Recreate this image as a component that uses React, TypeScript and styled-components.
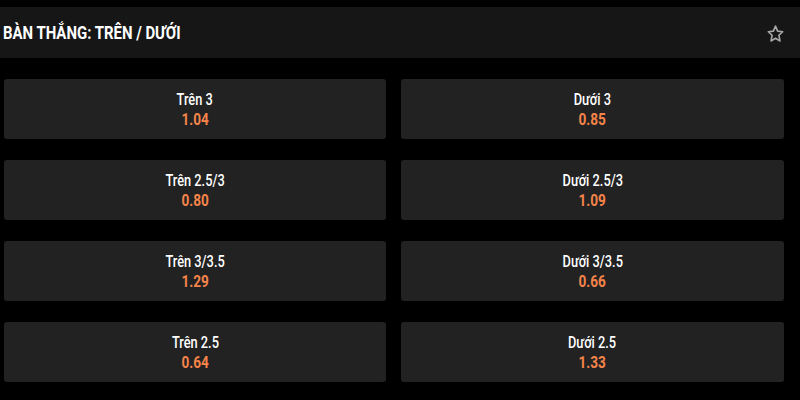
import React from 'react';
import styled, { createGlobalStyle } from 'styled-components';

const GlobalStyle = createGlobalStyle`
  html, body {
    margin: 0;
    padding: 0;
    background: #000;
    font-family: "Roboto", "Liberation Sans", sans-serif;
  }
`;

const Page = styled.div`
  width: 800px;
  height: 400px;
  background: #000;
  padding-top: 7px;
  box-sizing: border-box;
  overflow: hidden;
`;

const Header = styled.div`
  height: 51px;
  background: #161616;
  display: flex;
  align-items: center;
  justify-content: space-between;
  padding: 0 16px 0 3px;
`;

// the original uses a condensed face; Roboto is squeezed to match
const Title = styled.h2`
  margin: 0;
  color: #fff;
  font-size: 18px;
  font-weight: 700;
  white-space: nowrap;
  transform: scaleX(0.83);
  transform-origin: left center;
`;

const StarButton = styled.button`
  background: none;
  border: none;
  padding: 0;
  display: flex;
  margin-top: 1px;
`;

const Grid = styled.div`
  display: grid;
  grid-template-columns: 382px 383px;
  column-gap: 15px;
  row-gap: 21px;
  padding: 21px 0 0 4px;
`;

const Card = styled.div`
  height: 60px;
  background: #222222;
  border-radius: 3px;
  display: flex;
  flex-direction: column;
  align-items: center;
  justify-content: center;
  gap: 1px;
`;

const Label = styled.span`
  color: #fff;
  font-size: 16px;
  font-weight: 500;
  line-height: 19px;
  white-space: nowrap;
  transform: scaleX(0.8);
`;

const Odds = styled.span`
  color: #f5844a;
  font-size: 16px;
  font-weight: 700;
  line-height: 19px;
  transform: scaleX(0.85);
`;

const rows: [string, string, string, string][] = [
  ['Trên 3', '1.04', 'Dưới 3', '0.85'],
  ['Trên 2.5/3', '0.80', 'Dưới 2.5/3', '1.09'],
  ['Trên 3/3.5', '1.29', 'Dưới 3/3.5', '0.66'],
  ['Trên 2.5', '0.64', 'Dưới 2.5', '1.33'],
];

const Star = () => (
  <svg width="17" height="21" viewBox="0 0 24 26" fill="none" stroke="#a6a6a6" strokeWidth="2.3" strokeLinejoin="round">
    <path d="M12 2.5l3 7.2 7.2.8-5.4 5 1.5 8-6.3-3.8-6.3 3.8 1.5-8-5.4-5 7.2-.8z" />
  </svg>
);

export default function App() {
  return (
    <Page>
      <GlobalStyle />
      <Header>
        <Title>BÀN THẮNG: TRÊN / DƯỚI</Title>
        <StarButton aria-label="favorite">
          <Star />
        </StarButton>
      </Header>
      <Grid>
        {rows.map(([l1, o1, l2, o2]) => (
          <React.Fragment key={l1}>
            <Card>
              <Label>{l1}</Label>
              <Odds>{o1}</Odds>
            </Card>
            <Card>
              <Label>{l2}</Label>
              <Odds>{o2}</Odds>
            </Card>
          </React.Fragment>
        ))}
      </Grid>
    </Page>
  );
}
